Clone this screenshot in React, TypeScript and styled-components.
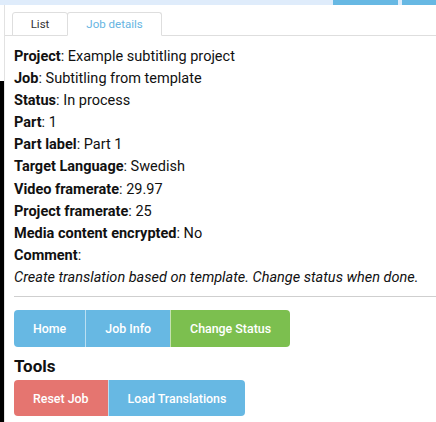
import React, { useState } from 'react'
import styled, { createGlobalStyle } from 'styled-components'

const GlobalStyle = createGlobalStyle`
  html, body {
    margin: 0;
    padding: 0;
    background: #fff;
    overflow: hidden;
  }
  body {
    font-family: Roboto, 'Liberation Sans', Arial, sans-serif;
    color: #111;
  }
`

const BLUE = '#67b8e3'
const GREEN = '#7cbf4f'
const RED = '#e57570'

const Page = styled.div`
  display: flex;
  flex-direction: column;
  height: 422px;
`

const TopStrip = styled.div`
  display: flex;
  justify-content: flex-end;
  gap: 4px;
  height: 5px;
  background: #dfecfb;
  flex-shrink: 0;
`

const StripBlock = styled.div<{ $w: number }>`
  width: ${(p) => p.$w}px;
  background: ${BLUE};
`

const Body = styled.div`
  display: flex;
  flex: 1;
  min-height: 0;
`

const Rail = styled.div`
  display: flex;
  flex-direction: column;
  width: 4px;
  flex-shrink: 0;
  padding-top: 76px;
`

const RailThumb = styled.div`
  flex: 1;
  background: #000;
`

const Panel = styled.div`
  flex: 1;
  min-width: 0;
  border-left: 1px solid #e2e2e2;
`

const TabBar = styled.div`
  display: flex;
  margin-top: 7px;
  padding-left: 7px;
  border-bottom: 1px solid #dedede;
`

const Tab = styled.button<{ $active?: boolean; $w: number }>`
  width: ${(p) => p.$w}px;
  height: 24px;
  padding: 0;
  margin-bottom: -1px;
  border: 1px solid #dedede;
  border-bottom: 1px solid ${(p) => (p.$active ? '#fff' : '#dedede')};
  border-radius: 3px 3px 0 0;
  background: #fff;
  font-family: inherit;
  font-size: 11.5px;
  color: ${(p) => (p.$active ? '#66b5e2' : '#333')};
  cursor: pointer;

  & + & {
    margin-left: -1px;
  }
`

const Content = styled.div`
  padding: 10px 0 0 9px;
`

const Line = styled.div`
  font-size: 14.5px;
  line-height: 22.1px;
  white-space: nowrap;
`

const Label = styled.b`
  font-weight: 700;
`

const Note = styled(Line)`
  font-style: italic;
`

const Rule = styled.hr`
  margin: 7px 0 13px;
  border: 0;
  border-top: 1px solid #cfcfcf;
`

const ButtonGroup = styled.div`
  display: flex;
`

const GroupButton = styled.button<{ $color: string; $h: number }>`
  height: ${(p) => p.$h}px;
  padding: 0 19px;
  border: 0;
  background: ${(p) => p.$color};
  color: #fff;
  font-family: inherit;
  font-size: 12.4px;
  font-weight: 500;
  cursor: pointer;

  &:first-child {
    border-radius: 4px 0 0 4px;
  }
  &:last-child {
    border-radius: 0 4px 4px 0;
  }
  & + & {
    border-left: 1px solid rgba(255, 255, 255, 0.55);
  }
`

const SectionTitle = styled.h3`
  margin: 10px 0 4px;
  font-size: 17px;
  line-height: 19px;
  font-weight: 700;
`

const details: [string, string][] = [
  ['Project', 'Example subtitling project'],
  ['Job', 'Subtitling from template'],
  ['Status', 'In process'],
  ['Part', '1'],
  ['Part label', 'Part 1'],
  ['Target Language', 'Swedish'],
  ['Video framerate', '29.97'],
  ['Project framerate', '25'],
  ['Media content encrypted', 'No'],
]

export default function App() {
  const [tab, setTab] = useState<'list' | 'details'>('details')

  return (
    <Page>
      <GlobalStyle />
      <TopStrip>
        <StripBlock $w={65} />
        <StripBlock $w={34} />
      </TopStrip>
      <Body>
        <Rail>
          <RailThumb />
        </Rail>
        <Panel>
          <TabBar>
            <Tab $w={56} $active={tab === 'list'} onClick={() => setTab('list')}>
              List
            </Tab>
            <Tab $w={95} $active={tab === 'details'} onClick={() => setTab('details')}>
              Job details
            </Tab>
          </TabBar>
          <Content>
            {details.map(([k, v]) => (
              <Line key={k}>
                <Label>{k}</Label>: {v}
              </Line>
            ))}
            <Line>
              <Label>Comment</Label>:
            </Line>
            <Note>Create translation based on template. Change status when done.</Note>
            <Rule />
            <ButtonGroup>
              <GroupButton $color={BLUE} $h={37}>Home</GroupButton>
              <GroupButton $color={BLUE} $h={37}>Job Info</GroupButton>
              <GroupButton $color={GREEN} $h={37}>Change Status</GroupButton>
            </ButtonGroup>
            <SectionTitle>Tools</SectionTitle>
            <ButtonGroup>
              <GroupButton $color={RED} $h={36}>Reset Job</GroupButton>
              <GroupButton $color={BLUE} $h={36}>Load Translations</GroupButton>
            </ButtonGroup>
          </Content>
        </Panel>
      </Body>
    </Page>
  )
}
